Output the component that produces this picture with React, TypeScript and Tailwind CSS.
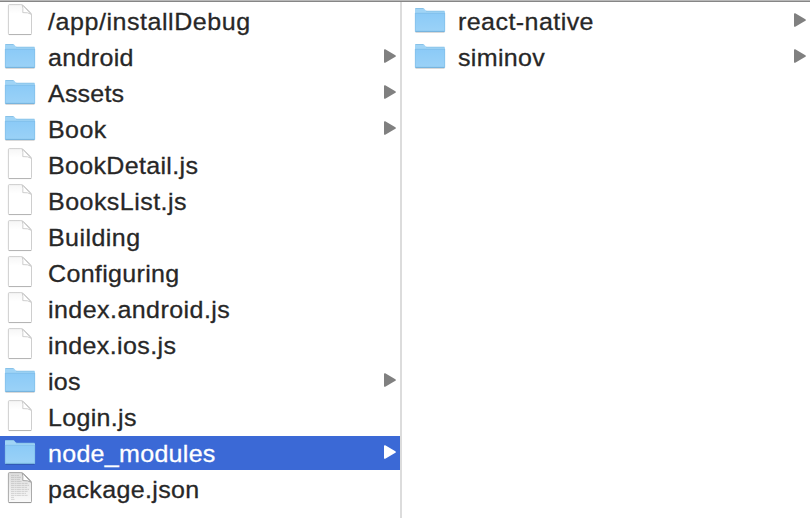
type Kind = 'file' | 'folder' | 'text';
type Entry = { name: string; kind: Kind; selected?: boolean; tracking: string };

const project: Entry[] = [
  { name: '/app/installDebug', kind: 'file', tracking: 'tracking-[0.54px]' },
  { name: 'android', kind: 'folder', tracking: 'tracking-[0.34px]' },
  { name: 'Assets', kind: 'folder', tracking: 'tracking-[0.2px]' },
  { name: 'Book', kind: 'folder', tracking: 'tracking-[0.43px]' },
  { name: 'BookDetail.js', kind: 'file', tracking: 'tracking-[0.32px]' },
  { name: 'BooksList.js', kind: 'file', tracking: 'tracking-[0.45px]' },
  { name: 'Building', kind: 'file', tracking: 'tracking-[0.43px]' },
  { name: 'Configuring', kind: 'file', tracking: 'tracking-[0.32px]' },
  { name: 'index.android.js', kind: 'file', tracking: 'tracking-[0.43px]' },
  { name: 'index.ios.js', kind: 'file', tracking: 'tracking-[0.37px]' },
  { name: 'ios', kind: 'folder', tracking: 'tracking-[0.3px]' },
  { name: 'Login.js', kind: 'file', tracking: 'tracking-[0.32px]' },
  { name: 'node_modules', kind: 'folder', selected: true, tracking: 'tracking-[0.29px]' },
  { name: 'package.json', kind: 'text', tracking: 'tracking-[0.34px]' },
];

const modules: Entry[] = [
  { name: 'react-native', kind: 'folder', tracking: 'tracking-[0.43px]' },
  { name: 'siminov', kind: 'folder', tracking: 'tracking-[0.32px]' },
];

function FolderIcon() {
  return (
    <svg viewBox="0 0 40 34" className="h-[34px] w-10 shrink-0">
      <path d="M5.5 28.4h29" stroke="#000" strokeOpacity=".15" strokeWidth="1.2" />
      <path d="M5 5.2Q5 4 6.2 4h6.600q.8 0 1.300.6l1.500 1.700q.5.6 1.400.6h16.800q1.200 0 1.200 1.200V12H5z" fill="#a0d4f6" />
      <path d="M5.400 4.500h8" stroke="#83bee5" strokeWidth=".8" />
      <path d="M16 7.200h18.500" stroke="#84bfe6" strokeWidth=".8" />
      <path d="M5 9h30v17.900q0 1.100-1.100 1.100H6.100Q5 28 5 26.900z" fill="url(#folder)" />
      <path d="M5.300 9.300h29.400" stroke="#7dbce8" strokeWidth=".8" />
      <path d="M5.400 27.400h29.200" stroke="#74b1da" strokeWidth="1" />
      <path d="M5.300 9v18.500M34.700 9v18.500" stroke="#7dbbe4" strokeWidth=".6" />
    </svg>
  );
}

function FileIcon({ written }: { written: boolean }) {
  const edge = written ? '#a0a0a0' : '#c8c8c8';
  return (
    <svg viewBox="0 0 40 34" className="h-[34px] w-10 shrink-0">
      <path
        d="M9.400.6h11.400q1.600 0 2.700 1l6.900 6.700q1.100 1.100 1.100 2.700v18.400q0 1.200-1.100 1.200H9.400q-1 0-1-1.200V1.700Q8.400.6 9.400.6z"
        fill={written ? 'url(#written)' : 'url(#blank)'}
        stroke={edge}
        strokeWidth=".9"
      />
      {written && (
        <path
          d="M11 3.400h8M11 5.400h10M11 7.400h9M11 9.400h11M11 11.400h17M11 13.400h18M11 15.400h16M11 17.400h18M11 19.400h17M11 21.400h15M11 23.400h17M11 25.400h3M11 27.400h4"
          stroke="#888"
          strokeOpacity=".38"
          strokeWidth=".8"
          strokeDasharray="3 .5 2 .4 4 .6"
        />
      )}
      <path
        d="M22.300 1Q23.200 4 22.800 8.600Q28 8.200 31 10.200Z"
        fill="#fff"
        stroke={edge}
        strokeWidth=".9"
        strokeLinejoin="round"
      />
      <path d="M8.800 30.500h22.400" stroke={written ? '#999' : '#b5b5b5'} strokeWidth="1" />
    </svg>
  );
}

function Arrow({ selected }: { selected?: boolean }) {
  return (
    <svg viewBox="0 0 12 14" className={`mt-[9px] h-[14px] w-3 shrink-0 ${selected ? 'fill-white' : 'fill-[#808080]'}`}>
      <path d="M0 1Q0-.1 1.200.2L11.400 6.200Q12.300 7 11.400 7.800L1.200 13.800Q0 14.100 0 13z" />
    </svg>
  );
}

function Row({ entry }: { entry: Entry }) {
  return (
    <li
      className={`flex h-[34px] items-start pr-1 ${
        entry.selected ? 'bg-[#3b69d6] text-white' : 'text-[#272727]'
      }`}
    >
      {entry.kind === 'folder' ? <FolderIcon /> : <FileIcon written={entry.kind === 'text'} />}
      <span className="ml-2 flex-1">
        <span
          className={`block w-max origin-left scale-x-[1.021] text-[24.5px] leading-[36px] whitespace-pre [-webkit-text-stroke:0.3px_currentColor] ${entry.tracking}`}
        >
          {entry.name}
        </span>
      </span>
      {entry.kind === 'folder' && <Arrow selected={entry.selected} />}
    </li>
  );
}

export default function App() {
  return (
    <div className="flex h-[518px] w-[810px] flex-col overflow-hidden bg-white font-['Liberation_Sans',Arial,sans-serif]">
      <svg width="0" height="0" className="absolute">
        <defs>
          <linearGradient id="folder" x1="0" y1="0" x2="0" y2="1">
            <stop offset="0" stopColor="#8bcaf7" />
            <stop offset="1" stopColor="#9bd2f7" />
          </linearGradient>
          <linearGradient id="blank" x1="0" y1="0" x2="0" y2="1">
            <stop offset="0" stopColor="#f6f6f6" />
            <stop offset=".3" stopColor="#fff" />
          </linearGradient>
          <linearGradient id="written" x1="0" y1="0" x2="0" y2="1">
            <stop offset="0" stopColor="#dedede" />
            <stop offset="1" stopColor="#fafafa" />
          </linearGradient>
        </defs>
      </svg>
      <div className="h-0.5 shrink-0 border-b border-[#868686] bg-[#b8b8b8]" />
      <div className="flex flex-1">
        <ul className="flex w-[400px] shrink-0 flex-col gap-0.5 pt-0.5">
          {project.map((entry) => (
            <Row key={entry.name} entry={entry} />
          ))}
        </ul>
        <div className="w-0.5 shrink-0 bg-[#dcdcdc]" />
        <ul className="flex flex-1 flex-col gap-0.5 pt-0.5 pl-2">
          {modules.map((entry) => (
            <Row key={entry.name} entry={entry} />
          ))}
        </ul>
      </div>
    </div>
  );
}
